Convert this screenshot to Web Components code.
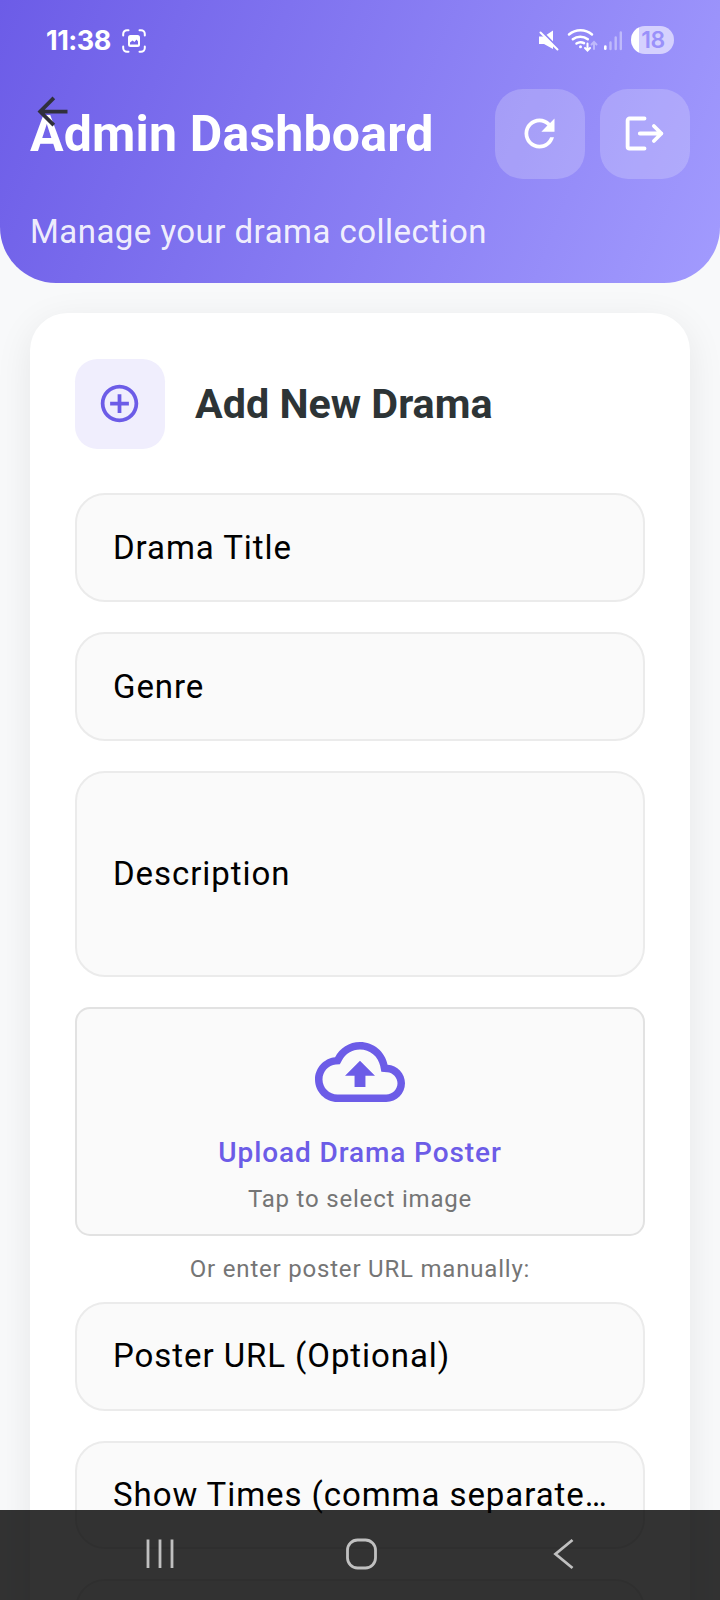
<!DOCTYPE html>
<html lang="en">
<head>
<meta charset="utf-8">
<title>Admin Dashboard</title>
<style>
html, body { margin: 0; height: 1600px; overflow: hidden; }
body { font-family: Roboto, sans-serif; background: #f8f9fa; }
</style>
</head>
<body>
<admin-screen></admin-screen>
<script>
const define = (name, html) => {
  const t = document.createElement('template');
  t.innerHTML = html;
  customElements.define(name, class extends HTMLElement {
    constructor() {
      super();
      this.attachShadow({ mode: 'open' }).append(t.content.cloneNode(true));
    }
  });
};

define('material-icon', `
<style>
:host { display: block; width: 45px; height: 45px; flex: none; }
::slotted(svg) { display: block; width: 100%; height: 100%; fill: currentColor; }
</style><slot></slot>`);

define('status-bar', `
<style>
:host { display: flex; justify-content: space-between; align-items: center; height: 36px; padding: 22px 46px 0 46px; color: #fff; }
.left, .right { display: flex; align-items: center; }
.time { font: 700 27px/36px Inter, sans-serif; letter-spacing: -.5px; padding-top: 1px; }
.left svg { margin: 1px 0 0 11px; }
.battery { width: 43px; height: 28px; border-radius: 14px; background: linear-gradient(90deg, #fff 8px, #d5d1fe 8px); color: #9a91fa; font: 600 23px/28px Inter, sans-serif; text-align: center; box-sizing: border-box; padding-left: 1px; letter-spacing: -.5px; margin-left: 9px; }
svg { display: block; }
</style>
<div class="left">
  <span class="time">11:38</span>
  <svg width="24" height="24" viewBox="0 0 24 24" fill="none" stroke="#fff" stroke-width="2" stroke-linecap="round"><path d="M1.200 6.500V5A3.800 3.800 0 0 1 5 1.200h1.500M17.500 1.200H19A3.800 3.800 0 0 1 22.800 5v1.500M22.800 17.500V19a3.800 3.800 0 0 1-3.800 3.800h-1.500M6.500 22.800H5A3.800 3.800 0 0 1 1.200 19v-1.500"/><path d="M8.500 6h7A2.500 2.500 0 0 1 18 8.500v7a2.500 2.500 0 0 1-2.500 2.500h-7A2.500 2.500 0 0 1 6 15.500v-7A2.500 2.500 0 0 1 8.500 6z" fill="#fff" stroke="none"/><path d="M8 15.500v-2l2.500-2 2 1.500 2-2.500 1.500 2v3z" fill="#7668ea" stroke="none"/></svg>
</div>
<div class="right">
  <svg width="84" height="28" viewBox="538 26 84 28" fill="none" stroke="#fff" stroke-linecap="round">
    <path d="M539 36.500h5l9-6v18.500l-9-5h-5z" fill="#fff" stroke="none"/>
    <path d="M541.500 31l17 17.500" stroke="#8f85f6" stroke-width="2"/><path d="M540.500 32.500l17 17" stroke-width="2"/>
    <path d="M569 34.500a17.500 17.500 0 0 1 23 0M572.800 39.300a12 12 0 0 1 15 0M576.500 43.500a7 7 0 0 1 7.500-.3" stroke-width="2.500"/>
    <circle cx="580.500" cy="46.800" r="1.500" fill="#fff" stroke="none"/>
    <path d="M587.500 43.500v6.500m-2.500-2l2.500 2.500 2.500-2.500" stroke-width="2"/>
    <path d="M594 49v-6.500m-2.500 2l2.500-2.500 2.500 2.500" stroke-width="2" opacity=".4"/>
    <path d="M605.300 46.500v2.300" stroke-width="2.600"/><path d="M610.500 42.500v6.500M615.700 37.500v11.500M620.800 32.500v16.500" stroke-width="2.400" opacity=".4"/>
  </svg>
  <div class="battery">18</div>
</div>`);

define('header-button', `
<style>
:host { display: flex; align-items: center; justify-content: center; box-sizing: border-box; width: 90px; height: 90px; padding: 0 1px 1px 0; border-radius: 28px; background: rgba(255,255,255,.2); color: #fff; }
</style><slot></slot>`);

define('dashboard-header', `
<style>
:host { display: block; position: relative; height: 283px; border-radius: 0 0 56px 56px; background: linear-gradient(111.5deg, #6c5ce7, #a29bfe); color: #fff; }
.row { display: flex; align-items: center; gap: 15px; padding: 0 30px; margin-top: 31px; height: 90px; }
h1 { flex: 1; margin: 0; font-size: 50px; font-weight: 700; line-height: 60px; letter-spacing: .18px; white-space: nowrap; }
p { margin: 31px 30px 0; font-size: 33px; line-height: 44px; letter-spacing: .47px; color: rgba(255,255,255,.9); }
.back { position: absolute; left: 30px; top: 89px; color: #30303c; }
</style>
<status-bar></status-bar>
<div class="row"><h1>Admin Dashboard</h1>
<header-button><material-icon><svg viewBox="0 0 24 24"><path d="M17.650 6.350C16.200 4.900 14.210 4 12 4c-4.420 0-7.990 3.580-7.990 8s3.570 8 7.990 8c3.730 0 6.840-2.550 7.730-6h-2.080c-.82 2.330-3.040 4-5.650 4-3.310 0-6-2.690-6-6s2.690-6 6-6c1.660 0 3.140.69 4.220 1.780L13 11h7V4l-2.350 2.350z"/></svg></material-icon></header-button>
<header-button><material-icon><svg viewBox="0 0 24 24"><path d="M12 4H4a1 1 0 0 0-1 1v14a1 1 0 0 0 1 1h8M9.500 12h11.500M17 8l4 4-4 4" fill="none" stroke="currentColor" stroke-width="2.050" stroke-linecap="round" stroke-linejoin="round"/></svg></material-icon></header-button>
</div>
<p>Manage your drama collection</p>
<material-icon class="back"><svg viewBox="0 0 24 24"><path d="M20 11H7.830l5.590-5.590L12 4l-8 8 8 8 1.410-1.410L7.830 13H20v-2z"/></svg></material-icon>`);

define('text-field', `
<style>
:host { display: flex; align-items: center; box-sizing: border-box; height: 108.750px; padding: 0 30px 0 36px; border: 2px solid #ebebeb; border-radius: 30px; background: #fafafa; color: #000; font-size: 33px; line-height: 44px; letter-spacing: .93px; }
:host([multiline]) { height: 206px; }
span { overflow: hidden; text-overflow: ellipsis; white-space: nowrap; }
</style><span><slot></slot></span>`);

define('poster-upload', `
<style>
:host { display: flex; flex-direction: column; align-items: center; box-sizing: border-box; height: 229px; border: 2px solid #e2e2e2; border-radius: 15px; background: #fafafa; }
material-icon { width: 90px; height: 90px; margin-top: 18px; color: #6c5ce7; }
b { margin-top: 17px; font-weight: 500; font-size: 28px; line-height: 38px; letter-spacing: .9px; color: #6c5ce7; }
small { margin-top: 11px; font-size: 24px; line-height: 32px; letter-spacing: .8px; color: #757575; }
</style>
<material-icon><svg viewBox="0 0 24 24"><path d="M19.350 10.040C18.670 6.590 15.640 4 12 4 9.110 4 6.600 5.640 5.350 8.040 2.340 8.360 0 10.910 0 14c0 3.310 2.690 6 6 6h13c2.760 0 5-2.240 5-5 0-2.640-2.050-4.780-4.650-4.960zM19 18H6c-2.210 0-4-1.790-4-4 0-2.050 1.530-3.760 3.560-3.970l1.070-.11.5-.95C8.080 7.140 9.940 6 12 6c2.620 0 4.880 1.860 5.390 4.430l.3 1.500 1.530.11c1.560.1 2.780 1.410 2.780 2.960 0 1.650-1.350 3-3 3zM8 13h2.550v3h2.900v-3H16l-4-4z"/></svg></material-icon>
<b>Upload Drama Poster</b><small>Tap to select image</small>`);

define('drama-card', `
<style>
:host { display: flex; flex-direction: column; box-sizing: border-box; height: 1500px; margin: 30px 30px 0; padding: 46px 45px 45px; border-radius: 37.500px; background: #fff; box-shadow: 0 9px 37px rgba(0,0,0,.08); }
.head { display: flex; align-items: center; gap: 30px; height: 90px; margin-bottom: 44.400px; }
.tile { display: flex; align-items: center; justify-content: center; box-sizing: border-box; width: 90px; height: 90px; padding: 0 1px 1px 0; border-radius: 22.500px; background: #f0eefd; color: #6c5ce7; }
h2 { margin: 0; font-size: 41.250px; line-height: 50px; font-weight: 700; color: #2d3436; white-space: nowrap; }
text-field { flex: none; margin-bottom: 30px; }
poster-upload { flex: none; }
p { margin: 17px 0 16px; font-size: 24px; line-height: 33px; letter-spacing: .8px; color: #757575; text-align: center; }
</style>
<div class="head"><div class="tile"><material-icon><svg viewBox="0 0 24 24"><path d="M13 7h-2v4H7v2h4v4h2v-4h4v-2h-4V7zm-1-5C6.480 2 2 6.480 2 12s4.480 10 10 10 10-4.480 10-10S17.520 2 12 2zm0 18c-4.410 0-8-3.590-8-8s3.590-8 8-8 8 3.590 8 8-3.590 8-8 8z"/></svg></material-icon></div><h2>Add New Drama</h2></div>
<text-field>Drama Title</text-field>
<text-field>Genre</text-field>
<text-field multiline>Description</text-field>
<poster-upload></poster-upload>
<p>Or enter poster URL manually:</p>
<text-field>Poster URL (Optional)</text-field>
<text-field>Show Times (comma separated)</text-field>
<text-field></text-field>`);

define('system-nav', `
<style>
:host { position: absolute; left: 0; right: 0; bottom: 0; height: 90px; background: rgba(0,0,0,.8); }
svg { display: block; }
</style>
<svg width="720" height="90" viewBox="0 0 720 90" fill="none" stroke="#c0c0c0" stroke-width="2.800"><path d="M148 29.500v28.500M160 29.500v28.500M172 29.500v28.500M572.500 30l-17 14 17 14"/><rect x="347.500" y="30" width="28" height="28" rx="10"/></svg>`);

define('admin-screen', `
<style>
:host { display: block; position: relative; width: 720px; height: 1600px; overflow: hidden; background: #f8f9fa; }
dashboard-header { z-index: 1; }
</style>
<dashboard-header></dashboard-header><drama-card></drama-card><system-nav></system-nav>`);
</script>
</body>
</html>
